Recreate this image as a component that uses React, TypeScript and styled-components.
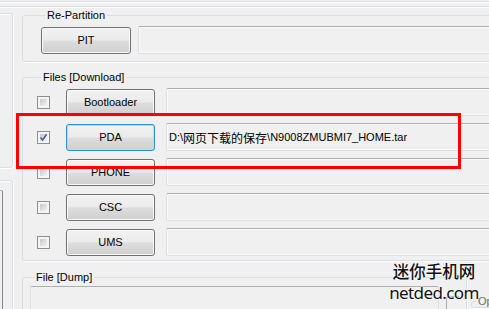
import { createGlobalStyle, styled } from 'styled-components';

const GlobalStyle = createGlobalStyle`
  html, body {
    margin: 0;
    padding: 0;
    background: #f0f0f0;
  }
  body {
    font-family: 'Liberation Sans', Arial, 'Noto Sans CJK SC', sans-serif;
    font-size: 11px;
    color: #000;
  }
`;

const Window = styled.div`
  position: relative;
  width: 489px;
  height: 309px;
  overflow: hidden;
  background: #f0f0f0;
`;

const TopEdge = styled.div`
  height: 6px;
  margin-top: 1px;
  box-sizing: border-box;
  border-top: 1px solid #d5dfe5;
  border-bottom: 1px solid #d5dfe5;
  box-shadow: 0 1px 0 #fff, inset 0 1px 0 #fff;
`;

const Body = styled.div`
  display: flex;
  align-items: flex-start;
  margin-top: 2px;
`;

const Side = styled.div`
  display: flex;
  flex-direction: column;
  gap: 12px;
  width: 13px;
  margin-top: 4px;
  flex: none;
`;

const SideBox = styled.div<{ $h: number }>`
  width: 33px;
  height: ${p => p.$h}px;
  margin-left: -20px;
  box-sizing: border-box;
  padding: 9px 9px 0 0;
  border: 1px solid #d5dfe5;
  border-radius: 3px;
  box-shadow: 1px 1px 0 #fff, inset 1px 1px 0 #fff;
`;

const LogBox = styled.div`
  height: 100%;
  border-top: 1px solid #abadb3;
  border-right: 1px solid #828790;
  border-radius: 0 2px 0 0;
`;

const Main = styled.div`
  display: flex;
  flex-direction: column;
  width: 600px;
  margin-left: 9px;
  flex: none;
`;

const Group = styled.fieldset<{ $pad: string; $mt?: number; $w?: number }>`
  margin: ${p => p.$mt ?? 0}px 0 0;
  padding: ${p => p.$pad};
  min-width: 0;
  ${p => (p.$w ? `width: ${p.$w}px; box-sizing: border-box; flex: none;` : '')}
  border: 1px solid #d5dfe5;
  border-radius: 3px;
  box-shadow: 1px 1px 0 #fff;
`;

const Legend = styled.legend<{ $dim?: boolean }>`
  margin-left: 4px;
  padding: 0 2px;
  font-size: 11px;
  line-height: 12px;
  color: ${p => (p.$dim ? '#6d6d6d' : '#000')};
`;

const Rows = styled.div`
  display: flex;
  flex-direction: column;
  gap: 7px;
`;

const Row = styled.div`
  display: flex;
  align-items: center;
  height: 28px;
`;

const Button = styled.button<{ $w: number; $focus?: boolean }>`
  flex: none;
  width: ${p => p.$w}px;
  height: 27px;
  padding: 0;
  box-sizing: border-box;
  border: 1px solid ${p => (p.$focus ? '#2b8fd0' : '#707070')};
  border-radius: 3px;
  background: linear-gradient(#f2f2f2 0%, #ebebeb 48%, #dddddd 52%, #cfcfcf 100%);
  box-shadow: inset 0 0 0 1px ${p => (p.$focus ? '#a6e4fb' : '#fbfbfb')};
  font-family: 'Liberation Sans', Arial, sans-serif;
  font-size: 11px;
  color: #000;
`;

const Field = styled.div<{ $ml: number }>`
  flex: 1;
  height: 28px;
  margin-left: ${p => p.$ml}px;
  padding-left: 2px;
  box-sizing: border-box;
  display: flex;
  align-items: center;
  border: 1px solid #dcdfe4;
  border-top-color: #acaeb3;
  border-radius: 2px;
  box-shadow: inset 0 0 0 1px #fafafa;
  white-space: nowrap;
  font-size: 11px;
  color: #000;
`;

const Cjk = styled.span`
  font-family: 'Noto Sans CJK SC', sans-serif;
  font-size: 12px;
`;

const Check = styled.span`
  flex: none;
  position: relative;
  width: 13px;
  height: 13px;
  margin-right: 16px;
  box-sizing: border-box;
  padding: 2px;
  border: 1px solid #8e8f8f;
  background: linear-gradient(135deg, #c3c6cb, #f4f4f4) content-box, #f5f5f5;

  svg {
    position: absolute;
    left: 1px;
    top: 1px;
  }
`;

const DumpRow = styled.div`
  display: flex;
  align-items: flex-start;
  gap: 4px;
`;

const DumpInner = styled.div`
  display: flex;
  align-items: flex-start;
  gap: 7px;
`;

const DumpBox = styled.div`
  width: 407px;
  height: 40px;
  border: 1px solid #dcdfe4;
  border-top-color: #acaeb3;
  border-radius: 2px;
`;

const DumpButton = styled.div`
  width: 12px;
  height: 30px;
  margin-top: 10px;
  border: 1px solid #aaa;
  border-right: none;
  border-radius: 3px 0 0 3px;
`;

const Highlight = styled.div`
  position: absolute;
  left: 16px;
  top: 113px;
  width: 445px;
  height: 56px;
  box-sizing: border-box;
  border: 3px solid #ff0000;
`;

const Watermark = styled.div`
  position: absolute;
  left: 380px;
  top: 259px;
  width: 108px;
  display: flex;
  flex-direction: column;
  align-items: center;
  color: #111;
  text-shadow: 0 0 2px #fff, 0 0 2px #fff;
`;

const MarkCn = styled.span`
  font-family: 'Noto Sans CJK SC', sans-serif;
  font-size: 16.5px;
  font-weight: 500;
  line-height: 24px;
`;

const MarkEn = styled.span`
  font-family: 'Noto Sans', sans-serif;
  font-size: 17px;
  line-height: 20px;
  letter-spacing: -0.6px;
`;

const files = [
  { name: 'Bootloader', on: false, path: '' },
  { name: 'PDA', on: true, path: 'pda' },
  { name: 'PHONE', on: false, path: '' },
  { name: 'CSC', on: false, path: '' },
  { name: 'UMS', on: false, path: '' },
];

const CheckMark = () => (
  <svg width="9" height="9" viewBox="0 0 9 9">
    <path d="M1.5 4.5 L3.6 7 L7.6 1.2" fill="none" stroke="#4b5f96" strokeWidth="1.6" />
  </svg>
);

const App = () => {
  return (
    <>
      <GlobalStyle />
      <Window>
        <TopEdge />
        <Body>
          <Side>
            <SideBox $h={155} />
            <SideBox $h={200}>
              <LogBox />
            </SideBox>
          </Side>

          <Main>
            <Group $pad="0 0 7px 18px">
              <Legend>Re-Partition</Legend>
              <Row style={{ marginTop: 5 }}>
                <Button $w={90}>PIT</Button>
                <Field $ml={7} />
              </Row>
            </Group>

            <Group $pad="5px 0 4px 14px" $mt={9}>
              <Legend>Files [Download]</Legend>
              <Rows>
                {files.map(f => (
                  <Row key={f.name}>
                    <Check>{f.on && <CheckMark />}</Check>
                    <Button $w={89} $focus={f.on}>{f.name}</Button>
                    <Field $ml={11}>
                      {f.path && (
                        <>
                          D:\<Cjk>网页下载的保存</Cjk>\N9008ZMUBMI7_HOME.tar
                        </>
                      )}
                    </Field>
                  </Row>
                ))}
              </Rows>
            </Group>

            <DumpRow>
              <Group $pad="3px 0 0 7px" $mt={10} $w={445}>
                <Legend>File [Dump]</Legend>
                <DumpInner>
                  <DumpBox />
                  <DumpButton />
                </DumpInner>
              </Group>
              <Group $pad="0" $mt={34} $w={120}>
                <Legend $dim>Option</Legend>
              </Group>
            </DumpRow>
          </Main>
        </Body>

        <Highlight />
        <Watermark>
          <MarkCn>迷你手机网</MarkCn>
          <MarkEn>netded.com</MarkEn>
        </Watermark>
      </Window>
    </>
  );
};

export default App;
